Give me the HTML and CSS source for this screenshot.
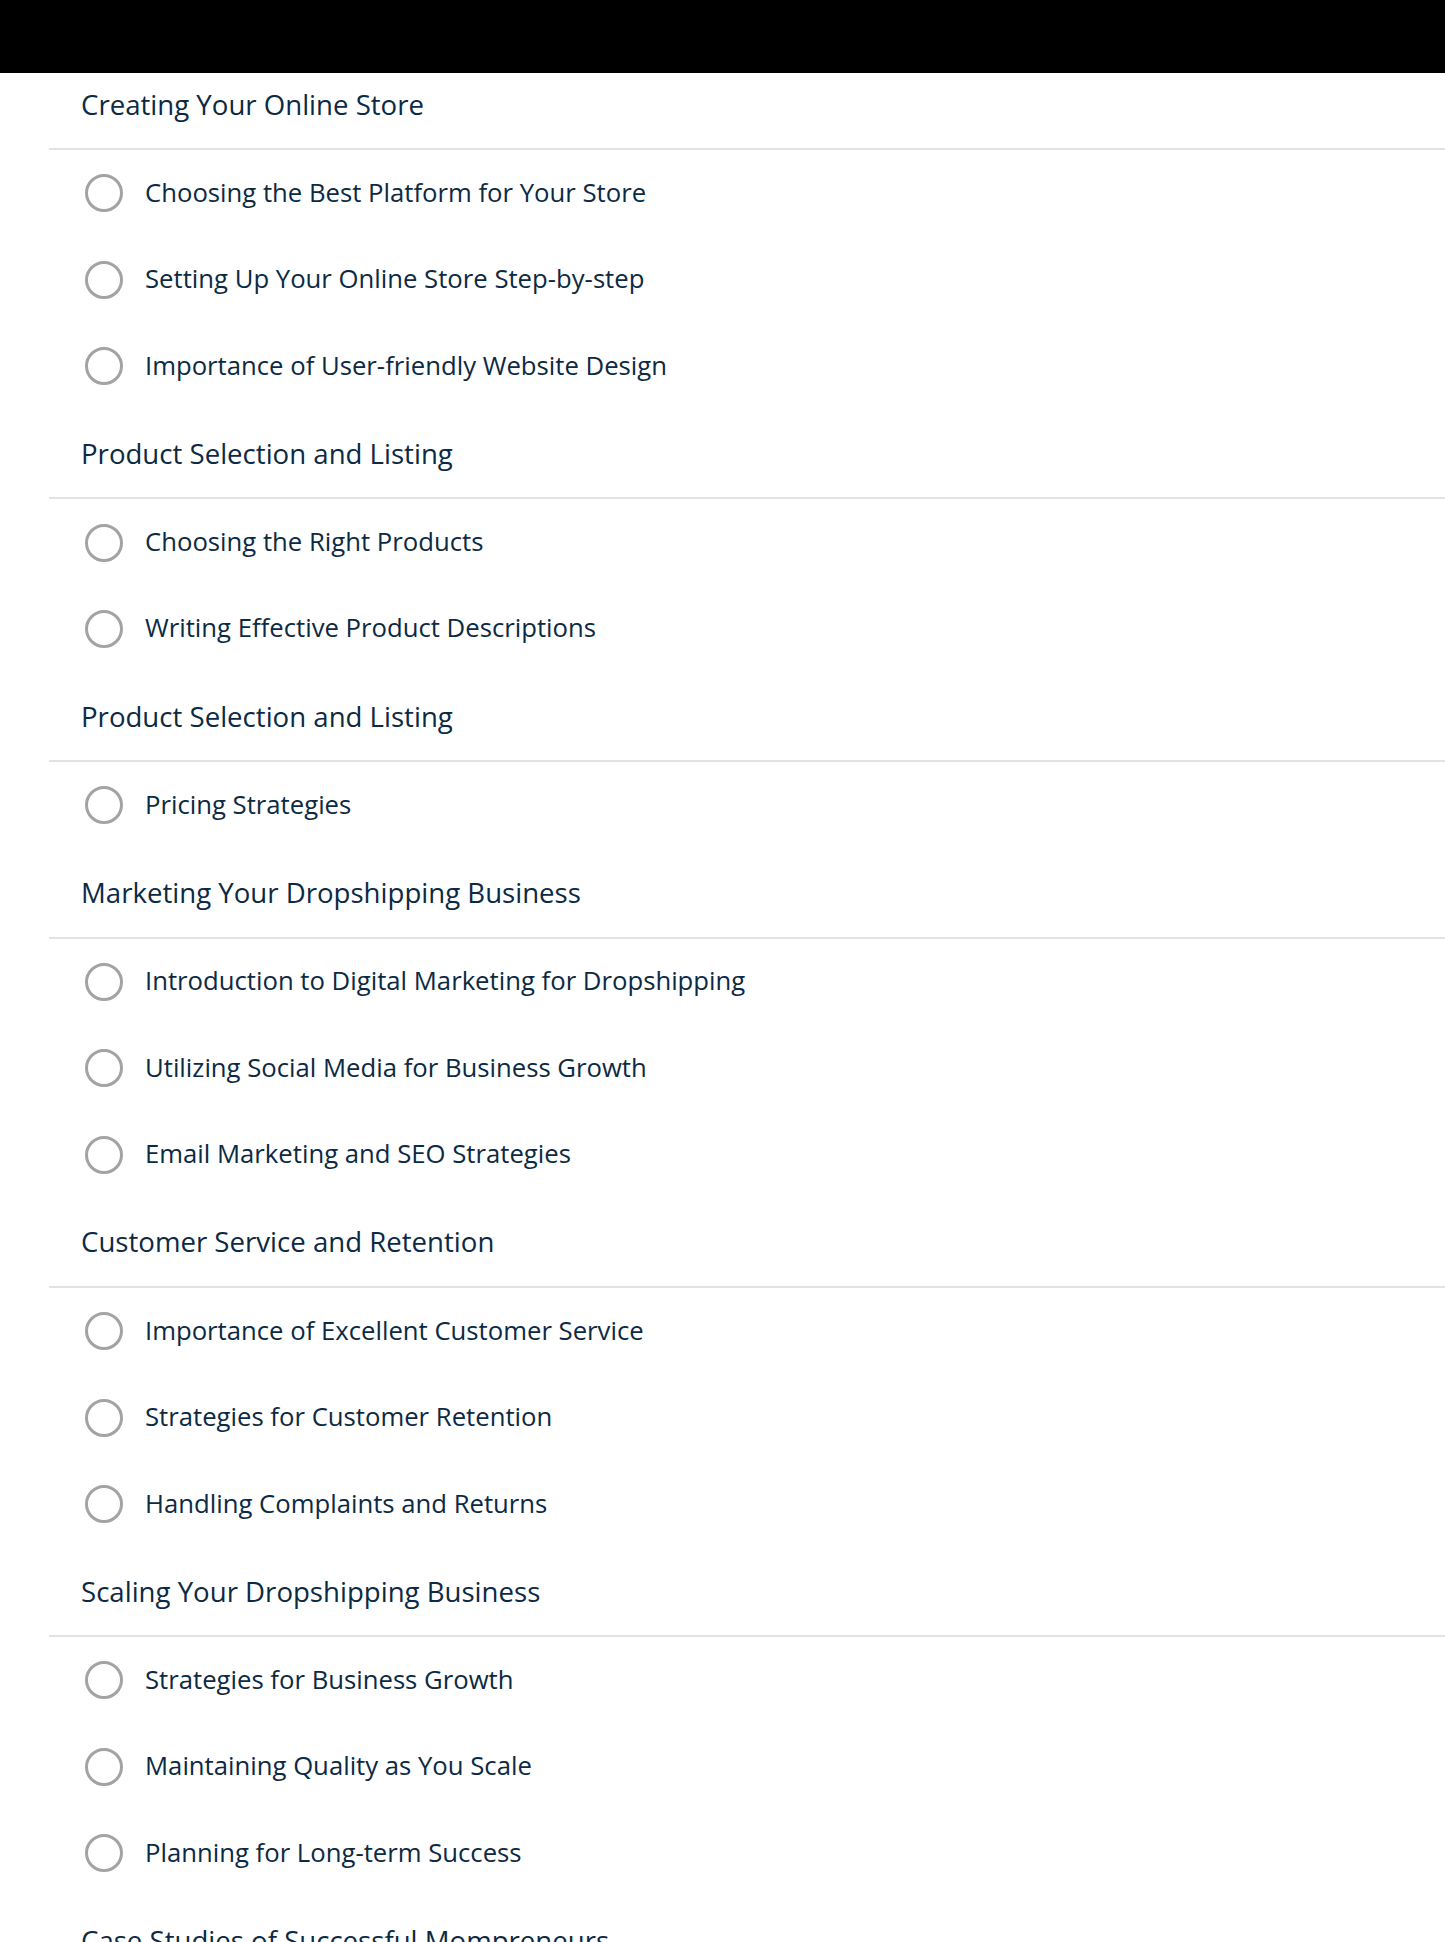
FILE: index.html
```html
<!DOCTYPE html>
<html lang="en">
<head>
<meta charset="utf-8">
<title>Course Outline</title>
<link rel="stylesheet" href="styles.css">
</head>
<body>
<div class="topbar"></div>
<main class="outline">
  <section class="module">
    <h2 class="module-title">Creating Your Online Store</h2>
    <ul class="lessons">
      <li class="lesson"><span class="radio"></span><span class="lesson-name">Choosing the Best Platform for Your Store</span></li>
      <li class="lesson"><span class="radio"></span><span class="lesson-name">Setting Up Your Online Store Step-by-step</span></li>
      <li class="lesson"><span class="radio"></span><span class="lesson-name">Importance of User-friendly Website Design</span></li>
    </ul>
  </section>
  <section class="module">
    <h2 class="module-title">Product Selection and Listing</h2>
    <ul class="lessons">
      <li class="lesson"><span class="radio"></span><span class="lesson-name">Choosing the Right Products</span></li>
      <li class="lesson"><span class="radio"></span><span class="lesson-name">Writing Effective Product Descriptions</span></li>
    </ul>
  </section>
  <section class="module">
    <h2 class="module-title">Product Selection and Listing</h2>
    <ul class="lessons">
      <li class="lesson"><span class="radio"></span><span class="lesson-name">Pricing Strategies</span></li>
    </ul>
  </section>
  <section class="module">
    <h2 class="module-title">Marketing Your Dropshipping Business</h2>
    <ul class="lessons">
      <li class="lesson"><span class="radio"></span><span class="lesson-name">Introduction to Digital Marketing for Dropshipping</span></li>
      <li class="lesson"><span class="radio"></span><span class="lesson-name">Utilizing Social Media for Business Growth</span></li>
      <li class="lesson"><span class="radio"></span><span class="lesson-name">Email Marketing and SEO Strategies</span></li>
    </ul>
  </section>
  <section class="module">
    <h2 class="module-title">Customer Service and Retention</h2>
    <ul class="lessons">
      <li class="lesson"><span class="radio"></span><span class="lesson-name">Importance of Excellent Customer Service</span></li>
      <li class="lesson"><span class="radio"></span><span class="lesson-name">Strategies for Customer Retention</span></li>
      <li class="lesson"><span class="radio"></span><span class="lesson-name">Handling Complaints and Returns</span></li>
    </ul>
  </section>
  <section class="module">
    <h2 class="module-title">Scaling Your Dropshipping Business</h2>
    <ul class="lessons">
      <li class="lesson"><span class="radio"></span><span class="lesson-name">Strategies for Business Growth</span></li>
      <li class="lesson"><span class="radio"></span><span class="lesson-name">Maintaining Quality as You Scale</span></li>
      <li class="lesson"><span class="radio"></span><span class="lesson-name">Planning for Long-term Success</span></li>
    </ul>
  </section>
  <section class="module">
    <h2 class="module-title">Case Studies of Successful Mompreneurs</h2>
    <ul class="lessons">
      <li class="lesson"><span class="radio"></span><span class="lesson-name">Learning from Real-life Success Stories</span></li>
    </ul>
  </section>
</main>
</body>
</html>
```

FILE: styles.css
```css
html, body {
  margin: 0;
  padding: 0;
  background: #ffffff;
}

body {
  font-family: "Open Sans", "Noto Sans", "Liberation Sans", sans-serif;
  color: #0c2a43;
}

.topbar {
  position: fixed;
  top: 0;
  left: 0;
  right: 0;
  height: 73px;
  background: #000000;
  z-index: 10;
}

.outline {
  padding-top: 60px;
  margin-left: 49px;
}

.module {
  display: flex;
  flex-direction: column;
}

.module-title {
  margin: 0;
  height: 87px;
  padding-bottom: 1px;
  display: flex;
  align-items: center;
  padding-left: 32px;
  border-bottom: 2px solid #e2e2e2;
  font-size: 27.6px;
  font-weight: 400;
  color: #0c2a43;
}

.lessons {
  list-style: none;
  margin: 0;
  padding: 0;
}

.lesson {
  height: 86.45px;
  display: flex;
  align-items: center;
  gap: 22px;
  padding-left: 36px;
}

.radio {
  flex: none;
  width: 32px;
  height: 32px;
  border: 3px solid #a3a3a3;
  border-radius: 50%;
}

.lesson-name {
  font-size: 25.7px;
  margin-top: -2px;
  color: #0c2a43;
}
```
